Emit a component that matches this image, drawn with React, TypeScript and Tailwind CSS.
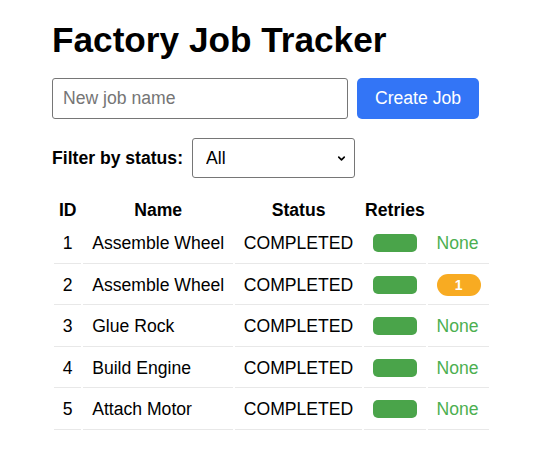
import { ChevronDown } from "lucide-react";

const jobs = [
  { id: 1, name: "Assemble Wheel", status: "COMPLETED", retries: 0 },
  { id: 2, name: "Assemble Wheel", status: "COMPLETED", retries: 1 },
  { id: 3, name: "Glue Rock", status: "COMPLETED", retries: 0 },
  { id: 4, name: "Build Engine", status: "COMPLETED", retries: 0 },
  { id: 5, name: "Attach Motor", status: "COMPLETED", retries: 0 },
];

const App = () => {
  return (
    <div className="min-h-screen bg-white text-black font-['Liberation_Sans',Arial,sans-serif] text-[17.6px]">
      <div className="px-[52px] pt-[20px]">
        <h1 className="text-[35.2px] font-bold leading-[40px] mb-[18px]">Factory Job Tracker</h1>

        {/* New job form */}
        <div className="flex gap-[9px] h-[41px]">
          <input
            type="text"
            placeholder="New job name"
            className="w-[296px] h-full border border-[#767676] rounded-[3px] px-[10px] placeholder:text-[#757575] outline-none"
          />
          <button className="w-[122px] h-full bg-[#3375f6] text-white rounded-[5px]">Create Job</button>
        </div>

        {/* Filter */}
        <div className="flex items-center gap-[9px] mt-[19px]">
          <label className="font-bold">Filter by status:</label>
          <div className="relative">
            <select className="appearance-none w-[163px] h-[40px] border border-[#767676] rounded-[3px] pl-[13px] bg-white outline-none">
              <option>All</option>
              <option>PENDING</option>
              <option>RUNNING</option>
              <option>COMPLETED</option>
              <option>FAILED</option>
            </select>
            <ChevronDown
              className="absolute right-[8px] top-[15px] w-[11px] h-[11px] pointer-events-none"
              strokeWidth={3.5}
            />
          </div>
        </div>

        {/* Jobs table */}
        <table className="mt-[18px] border-separate border-spacing-[2px] whitespace-nowrap">
          <thead>
            <tr className="leading-[20px]">
              <th className="px-[1px] py-[2px] font-bold">ID</th>
              <th className="px-[1px] py-[2px] font-bold">Name</th>
              <th className="px-[1px] py-[2px] font-bold">Status</th>
              <th className="px-[1px] py-[2px] font-bold">Retries</th>
              <th className="px-[1px] py-[2px]"></th>
            </tr>
          </thead>
          <tbody>
            {jobs.map((job) => (
              <tr key={job.id} className="leading-[22px]">
                <td className="px-[8.8px] py-[8.25px] text-center border-b border-[#e8e8e8]">{job.id}</td>
                <td className="px-[8.8px] py-[8.25px] border-b border-[#e8e8e8]">{job.name}</td>
                <td className="px-[8.8px] py-[8.25px] border-b border-[#e8e8e8]">{job.status}</td>
                <td className="px-[8.8px] py-[8.25px] border-b border-[#e8e8e8]">
                  <div className="w-[44px] h-[18px] rounded-[5px] bg-[#4aa44a]" />
                </td>
                <td className="px-[8.8px] py-[8.25px] border-b border-[#e8e8e8]">
                  {job.retries > 0 ? (
                    <span className="flex items-center justify-center w-[44px] h-[22px] rounded-full bg-[#f8ab22] text-white font-bold text-[14px]">
                      {job.retries}
                    </span>
                  ) : (
                    <span className="text-[#4caf50]">None</span>
                  )}
                </td>
              </tr>
            ))}
          </tbody>
        </table>
      </div>
    </div>
  );
};

export default App;
